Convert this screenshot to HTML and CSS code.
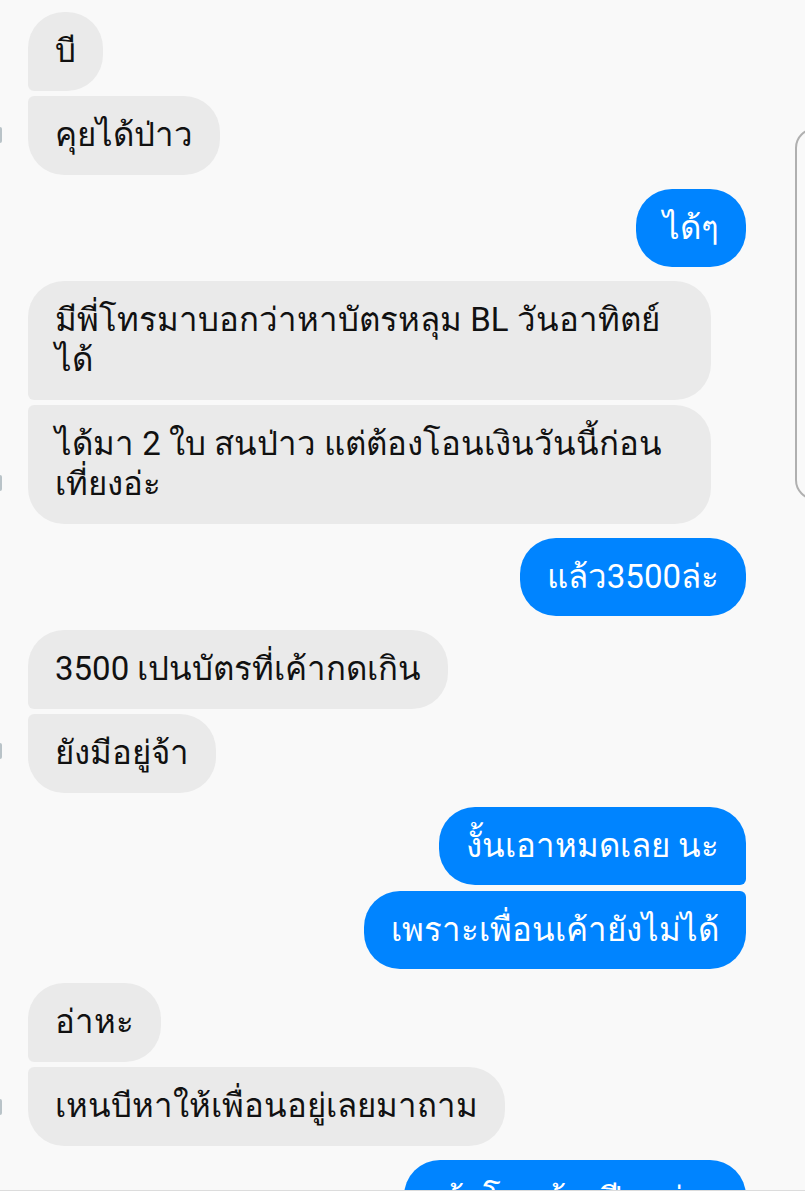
FILE: index.html
```html
<!DOCTYPE html>
<html lang="th">
<head>
<meta charset="utf-8">
<title>Chat</title>
<link rel="stylesheet" href="styles.css">
</head>
<body>
<div class="screen">
  <div class="chat">
    <div class="group in">
      <div class="msg first">บี</div>
      <div class="msg last">คุยได้ป่าว</div>
    </div>
    <div class="group out">
      <div class="msg">ได้ๆ</div>
    </div>
    <div class="group in">
      <div class="msg first wide">มีพี่โทรมาบอกว่าหาบัตรหลุม BL วันอาทิตย์<br>ได้</div>
      <div class="msg last wide">ได้มา 2 ใบ สนป่าว แต่ต้องโอนเงินวันนี้ก่อน<br>เที่ยงอ่ะ</div>
    </div>
    <div class="group out">
      <div class="msg">แล้ว3500ล่ะ</div>
    </div>
    <div class="group in">
      <div class="msg first">3500 เปนบัตรที่เค้ากดเกิน</div>
      <div class="msg last">ยังมีอยู่จ้า</div>
    </div>
    <div class="group out">
      <div class="msg first">งั้นเอาหมดเลย นะ</div>
      <div class="msg last">เพราะเพื่อนเค้ายังไม่ได้</div>
    </div>
    <div class="group in">
      <div class="msg first">อ่าหะ</div>
      <div class="msg last">เหนบีหาให้เพื่อนอยู่เลยมาถาม</div>
    </div>
    <div class="group out">
      <div class="msg first">เค้าโอนค้างปีนะอ่ะๆ</div>
    </div>
  </div>
  <div class="avatar a1"></div>
  <div class="avatar a2"></div>
  <div class="avatar a3"></div>
  <div class="avatar a4"></div>
  <div class="edge-panel"></div>
  <div class="bottom-bar"></div>
</div>
</body>
</html>
```
FILE: styles.css
```css
html, body {
  margin: 0;
  padding: 0;
  background: #f9f9f9;
}
body {
  font-family: Roboto, "Noto Sans", "DejaVu Sans", sans-serif;
  color: #111;
}
.screen {
  position: relative;
  width: 805px;
  height: 1200px;
  overflow: hidden;
}
.chat {
  display: flex;
  flex-direction: column;
  gap: 14px;
  padding: 12px 59px 0 28px;
}
.group {
  display: flex;
  flex-direction: column;
  gap: 5.5px;
}
.group.in { align-items: flex-start; }
.group.out { align-items: flex-end; }
.msg {
  font-size: 33px;
  line-height: 40px;
  padding: 19.25px 27px;
  border-radius: 36px;
  white-space: nowrap;
}
.msg.wide {
  box-sizing: border-box;
  width: 683px;
}
.in .msg { background: #eaeaea; color: #111; }
.out .msg { background: #0084ff; color: #fff; }
.in .msg.first { border-bottom-left-radius: 6px; }
.in .msg.last { border-top-left-radius: 6px; }
.out .msg.first { border-bottom-right-radius: 6px; }
.out .msg.last { border-top-right-radius: 6px; }
.avatar {
  position: absolute;
  left: 0;
  width: 2px;
  height: 16px;
  background: #b9c3c8;
  border-radius: 0 2px 2px 0;
}
.a1 { top: 127px; }
.a2 { top: 475px; }
.a3 { top: 743px; }
.a4 { top: 1099px; }
.edge-panel {
  position: absolute;
  left: 795px;
  top: 128px;
  width: 40px;
  height: 372px;
  border: 2px solid #b0b0b0;
  border-radius: 22px;
  box-sizing: border-box;
}
.bottom-bar {
  position: absolute;
  left: 0;
  right: 0;
  top: 1190px;
  bottom: 0;
  background: #fff;
  border-top: 1px solid #dcdcdc;
}
```
